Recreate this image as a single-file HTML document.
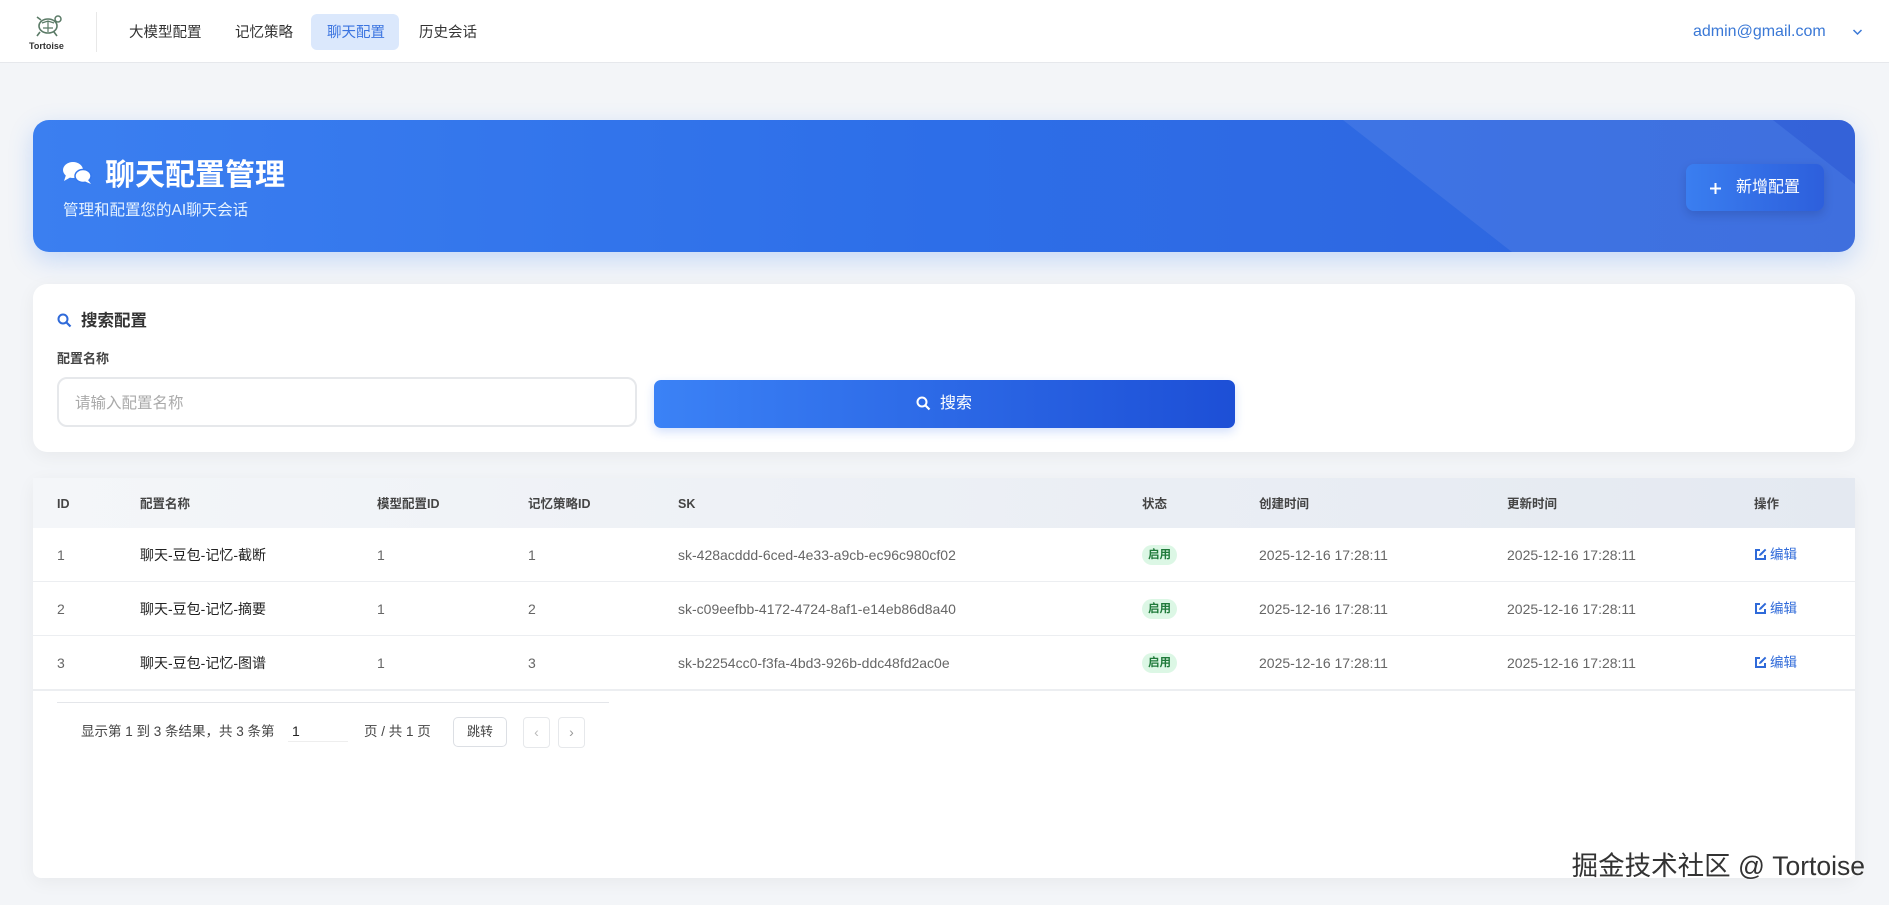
<!DOCTYPE html>
<html><head><meta charset="utf-8"><style>
*{box-sizing:border-box;margin:0;padding:0}
body{width:1889px;height:905px;background:#f3f5f8;font-family:"Liberation Sans","Noto Sans CJK SC",sans-serif;position:relative;overflow:hidden;color:#333}
.a{position:absolute;white-space:nowrap;line-height:20px}
.hdr{position:absolute;left:0;top:0;width:1889px;height:63px;background:#fff;border-bottom:1px solid #e6e8ec}
.nav{font-size:14.5px;color:#333;top:23px}
.banner{left:33px;top:120px;width:1822px;height:132px;border-radius:16px;background:linear-gradient(90deg,#3b7ff0 0%,#2d6ee8 50%,#2f63dc 100%);box-shadow:0 8px 24px rgba(59,130,246,.25);overflow:hidden}
.card{background:#fff;border-radius:14px;box-shadow:0 4px 18px rgba(0,0,0,.05)}
.th{top:494px;font-size:12.5px;font-weight:bold;color:#444}
.td{font-size:14px;color:#666}
.nm{color:#222}
.tag{font-size:11.5px;font-weight:bold;color:#1f7a3a;background:#dcf7e5;border-radius:10px;padding:0 6px;line-height:20px}
.ed{font-size:13.5px;color:#2f6ad9}
.ed svg{vertical-align:-2px;margin-right:3px}
.rl{position:absolute;left:33px;width:1822px;height:1px;background:#eceef1}
</style></head><body>
<div class="hdr"></div>
<svg class="a" style="left:34px;top:12px" width="30" height="26" viewBox="0 0 30 26"><ellipse cx="14" cy="14" rx="9" ry="7" fill="none" stroke="#5a7a66" stroke-width="1.6"/><path d="M8 11 L14 9 L20 11 M9 16 L19 16 M14 9 L14 20" stroke="#5a7a66" stroke-width="1.2" fill="none"/><circle cx="24" cy="7" r="3" fill="none" stroke="#5a7a66" stroke-width="1.5"/><path d="M6 20 L3 24 M20 20 L23 24 M7 8 L3 5" stroke="#5a7a66" stroke-width="1.6"/></svg>
<div class="a" style="left:29px;top:36px;font-size:9px;font-weight:bold;color:#333">Tortoise</div>
<div class="a" style="left:96px;top:12px;width:1px;height:40px;background:#e8e8e8"></div>
<div class="a nav" style="left:129px">大模型配置</div>
<div class="a nav" style="left:235px">记忆策略</div>
<div class="a" style="left:311px;top:14px;width:88px;height:36px;background:#dbe8fc;border-radius:6px"></div>
<div class="a nav" style="left:327px;color:#3b74e0">聊天配置</div>
<div class="a nav" style="left:419px">历史会话</div>
<div class="a" style="left:1693px;top:22px;font-size:16px;color:#3a78d6">admin@gmail.com</div>
<svg class="a" style="left:1852px;top:28px" width="11" height="8" viewBox="0 0 11 8"><path d="M1.5 2 L5.5 6 L9.5 2" stroke="#3a78d6" stroke-width="1.5" fill="none"/></svg>

<div class="a banner">
<div style="position:absolute;left:1310px;top:0;width:900px;height:132px;background:rgba(255,255,255,.08);transform:skewX(52deg);transform-origin:top left"></div>
<div style="position:absolute;left:1740px;top:0;width:200px;height:132px;background:rgba(20,60,200,.25);transform:skewX(52deg);transform-origin:top left"></div>
</div>
<svg class="a" style="left:63px;top:161px" width="30" height="24" viewBox="0 0 30 24"><ellipse cx="10" cy="9" rx="10" ry="8" fill="#fff"/><path d="M3 14 L1 20 L8 16Z" fill="#fff"/><ellipse cx="20" cy="15" rx="8" ry="6.5" fill="#fff" stroke="#3478ef" stroke-width="1.5"/><path d="M25 19 L28 23 L21 20Z" fill="#fff"/></svg>
<div class="a" style="left:105px;top:159px;font-size:30px;line-height:34px;font-weight:bold;color:#fff">聊天配置管理</div>
<div class="a" style="left:63px;top:201px;font-size:15.5px;color:#e6f3ff">管理和配置您的AI聊天会话</div>
<div class="a" style="left:1686px;top:164px;width:138px;height:47px;border-radius:8px;background:linear-gradient(90deg,#3a7ef0,#2d5fdc);box-shadow:0 4px 10px rgba(0,0,40,.15)"></div>
<svg class="a" style="left:1709px;top:182px" width="13" height="13" viewBox="0 0 13 13"><path d="M6.5 1 V12 M1 6.5 H12" stroke="#fff" stroke-width="2"/></svg>
<div class="a" style="left:1736px;top:178px;font-size:16px;color:#fff">新增配置</div>

<div class="a card" style="left:33px;top:284px;width:1822px;height:168px"></div>
<svg class="a" style="left:57px;top:313px" width="15" height="15" viewBox="0 0 15 15"><circle cx="6" cy="6" r="4.5" fill="none" stroke="#2f6ad9" stroke-width="2"/><path d="M9.5 9.5 L13.5 13.5" stroke="#2f6ad9" stroke-width="2.2"/></svg>
<div class="a" style="left:81px;top:311px;font-size:16.5px;font-weight:bold;color:#333">搜索配置</div>
<div class="a" style="left:57px;top:349px;font-size:13px;font-weight:bold;color:#444">配置名称</div>
<div class="a" style="left:57px;top:377px;width:580px;height:50px;border:2px solid #e6e8eb;border-radius:10px;background:#fff"></div>
<div class="a" style="left:75px;top:394px;font-size:15.5px;color:#aaa">请输入配置名称</div>
<div class="a" style="left:654px;top:380px;width:581px;height:48px;border-radius:7px;background:linear-gradient(90deg,#3b82f6,#1d4fd6);box-shadow:0 4px 10px rgba(37,99,235,.2)"></div>
<svg class="a" style="left:916px;top:396px" width="15" height="15" viewBox="0 0 15 15"><circle cx="6" cy="6" r="4.5" fill="none" stroke="#fff" stroke-width="2"/><path d="M9.5 9.5 L13.5 13.5" stroke="#fff" stroke-width="2.2"/></svg>
<div class="a" style="left:940px;top:394px;font-size:16px;color:#fff">搜索</div>

<div class="a card" style="left:33px;top:478px;width:1822px;height:400px;border-radius:8px"></div>
<div class="a" style="left:33px;top:478px;width:1822px;height:50px;background:linear-gradient(90deg,#f4f6f9,#e4e9f1)"></div>
<div class="a th" style="left:57px">ID</div>
<div class="a th" style="left:140px">配置名称</div>
<div class="a th" style="left:377px">模型配置ID</div>
<div class="a th" style="left:528px">记忆策略ID</div>
<div class="a th" style="left:678px">SK</div>
<div class="a th" style="left:1142px">状态</div>
<div class="a th" style="left:1259px">创建时间</div>
<div class="a th" style="left:1507px">更新时间</div>
<div class="a th" style="left:1754px">操作</div>

<div class="rl" style="top:581px"></div>
<div class="rl" style="top:635px"></div>
<div class="rl" style="top:689px;height:2px"></div>

<div class="a td" style="left:57px;top:545px">1</div><div class="a td nm" style="left:140px;top:545px">聊天-豆包-记忆-截断</div><div class="a td" style="left:377px;top:545px">1</div><div class="a td" style="left:528px;top:545px">1</div><div class="a td" style="left:678px;top:545px">sk-428acddd-6ced-4e33-a9cb-ec96c980cf02</div><div class="a tag" style="left:1142px;top:545px">启用</div><div class="a td" style="left:1259px;top:545px">2025-12-16 17:28:11</div><div class="a td" style="left:1507px;top:545px">2025-12-16 17:28:11</div><div class="a ed" style="left:1754px;top:545px"><svg width="13" height="13" viewBox="0 0 13 13"><path d="M6 2 H2 V11 H11 V7" stroke="#2f6ad9" stroke-width="2" fill="none"/><path d="M5 8 L5.5 6 L11 0.8 L12.3 2.1 L7 7.5Z" fill="#2f6ad9"/></svg>编辑</div>

<div class="a td" style="left:57px;top:599px">2</div><div class="a td nm" style="left:140px;top:599px">聊天-豆包-记忆-摘要</div><div class="a td" style="left:377px;top:599px">1</div><div class="a td" style="left:528px;top:599px">2</div><div class="a td" style="left:678px;top:599px">sk-c09eefbb-4172-4724-8af1-e14eb86d8a40</div><div class="a tag" style="left:1142px;top:599px">启用</div><div class="a td" style="left:1259px;top:599px">2025-12-16 17:28:11</div><div class="a td" style="left:1507px;top:599px">2025-12-16 17:28:11</div><div class="a ed" style="left:1754px;top:599px"><svg width="13" height="13" viewBox="0 0 13 13"><path d="M6 2 H2 V11 H11 V7" stroke="#2f6ad9" stroke-width="2" fill="none"/><path d="M5 8 L5.5 6 L11 0.8 L12.3 2.1 L7 7.5Z" fill="#2f6ad9"/></svg>编辑</div>

<div class="a td" style="left:57px;top:653px">3</div><div class="a td nm" style="left:140px;top:653px">聊天-豆包-记忆-图谱</div><div class="a td" style="left:377px;top:653px">1</div><div class="a td" style="left:528px;top:653px">3</div><div class="a td" style="left:678px;top:653px">sk-b2254cc0-f3fa-4bd3-926b-ddc48fd2ac0e</div><div class="a tag" style="left:1142px;top:653px">启用</div><div class="a td" style="left:1259px;top:653px">2025-12-16 17:28:11</div><div class="a td" style="left:1507px;top:653px">2025-12-16 17:28:11</div><div class="a ed" style="left:1754px;top:653px"><svg width="13" height="13" viewBox="0 0 13 13"><path d="M6 2 H2 V11 H11 V7" stroke="#2f6ad9" stroke-width="2" fill="none"/><path d="M5 8 L5.5 6 L11 0.8 L12.3 2.1 L7 7.5Z" fill="#2f6ad9"/></svg>编辑</div>

<div class="a" style="left:57px;top:702px;width:552px;height:1px;background:#e4e6ea"></div>
<div class="a" style="left:81px;top:722px;font-size:13.5px;color:#444">显示第 1 到 3 条结果，共 3 条第</div>
<div class="a" style="left:292px;top:721px;font-size:14px;color:#222">1</div>
<div class="a" style="left:288px;top:741px;width:60px;height:1px;background:#eee"></div>
<div class="a" style="left:364px;top:722px;font-size:13.5px;color:#444">页 / 共 1 页</div>
<div class="a" style="left:453px;top:717px;width:54px;height:30px;border:1px solid #dcdfe4;border-radius:5px;font-size:13px;color:#444;text-align:center;line-height:28px">跳转</div>
<div class="a" style="left:523px;top:717px;width:27px;height:31px;border:1px solid #e6e8eb;border-radius:4px;color:#bbb;text-align:center;line-height:29px;font-size:14px">‹</div>
<div class="a" style="left:558px;top:717px;width:27px;height:31px;border:1px solid #e6e8eb;border-radius:4px;color:#999;text-align:center;line-height:29px;font-size:14px">›</div>

<div class="a" style="right:24px;top:850px;font-size:26.5px;line-height:32px;color:#333;text-shadow:0 0 2px #fff">掘金技术社区 @ Tortoise</div>
</body></html>
